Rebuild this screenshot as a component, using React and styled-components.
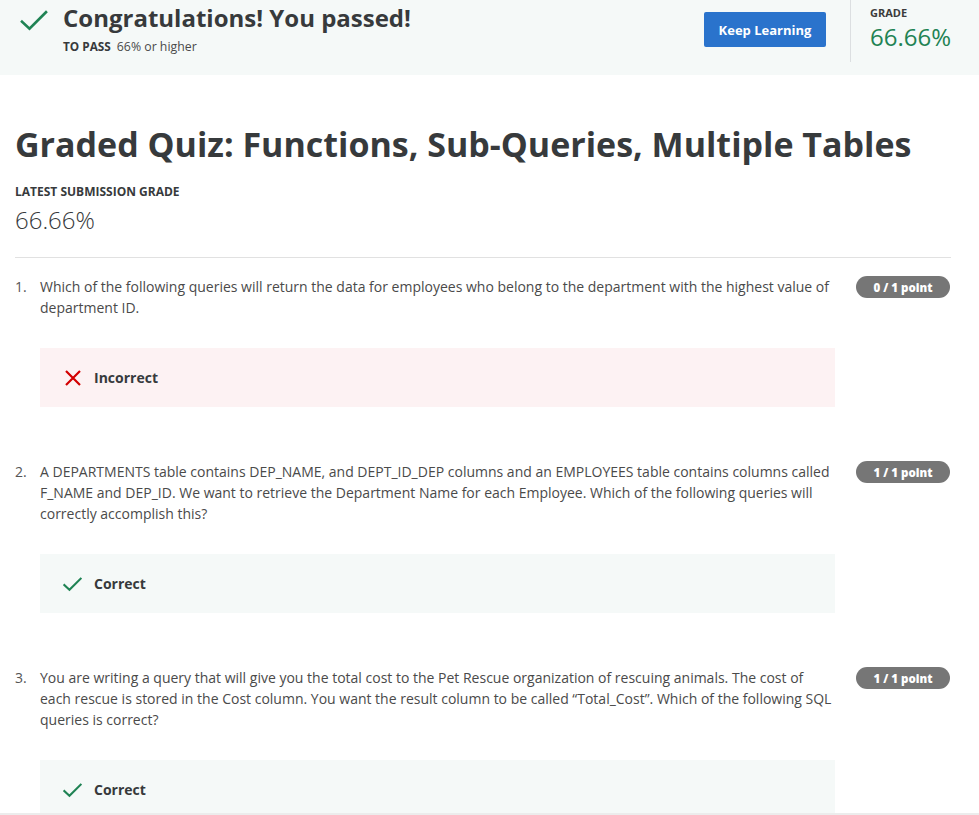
import React from "react";
import styled, { createGlobalStyle } from "styled-components";

const GlobalStyle = createGlobalStyle`
  html, body { margin: 0; padding: 0; background: #ffffff; }
  body { font-family: "Open Sans", "Noto Sans", sans-serif; color: #373a3c; }
  * { box-sizing: border-box; }
`;

const Banner = styled.header`
  display: flex;
  align-items: flex-start;
  height: 75px;
  background: #f5f9f8;
  padding-left: 20px;
`;

const BannerIcon = styled.div`
  width: 28px;
  height: 22px;
  margin-top: 9px;
  flex: none;
`;

const BannerText = styled.div`
  margin-left: 15px;
  display: flex;
  flex-direction: column;
  flex: 1;
`;

const BannerTitle = styled.h2`
  margin: 2px 0 0;
  font-size: 24px;
  line-height: 32px;
  font-weight: 700;
  color: #373a3c;
`;

const PassLine = styled.div`
  margin-top: 4px;
  font-size: 12.3px;
  line-height: 17px;
  color: #4a4a4a;
  span { font-weight: 700; color: #373a3c; margin-right: 6px; font-size: 11.8px; }
`;

const KeepButton = styled.button`
  margin-top: 12px;
  width: 122px;
  height: 35px;
  border: none;
  border-radius: 2px;
  background: #2a73cc;
  color: #ffffff;
  font-family: "Open Sans", "Noto Sans", sans-serif;
  font-size: 13px;
  font-weight: 700;
  flex: none;
`;

const Divider = styled.div`
  width: 1px;
  height: 62px;
  background: #dcdfe1;
  margin-left: 24px;
  flex: none;
`;

const GradeBox = styled.div`
  width: 128px;
  padding-left: 19px;
  padding-top: 5px;
  flex: none;
`;

const GradeLabel = styled.div`
  font-size: 11px;
  line-height: 16px;
  font-weight: 700;
  color: #3c3c3c;
`;

const GradeValue = styled.div`
  font-size: 24px;
  line-height: 32px;
  color: #1f8354;
`;

const Main = styled.main`
  padding: 0 28px 0 15px;
`;

const PageTitle = styled.h1`
  margin: 46px 0 0;
  font-size: 34px;
  line-height: 46px;
  font-weight: 700;
  color: #373a3c;
  white-space: nowrap;
`;

const SubLabel = styled.div`
  margin-top: 16px;
  font-size: 12px;
  line-height: 18px;
  font-weight: 700;
  color: #373a3c;
`;

const SubValue = styled.div`
  margin-top: 3px;
  font-size: 24px;
  line-height: 32px;
  font-weight: 300;
  color: #373a3c;
`;

const Rule = styled.hr`
  border: none;
  border-top: 1px solid #e1e1e1;
  margin: 21px 0 0;
`;

const QuestionList = styled.ol`
  list-style: none;
  margin: 0;
  padding: 0;
`;

const Question = styled.li`
  display: flex;
  align-items: flex-start;
  padding-top: ${(p) => p.$top}px;
`;

const Num = styled.div`
  width: 25px;
  flex: none;
  font-size: 14px;
  line-height: 21px;
  color: #555;
`;

const Body = styled.div`
  display: flex;
  flex-direction: column;
  width: 795px;
  flex: none;
`;

const Prompt = styled.p`
  margin: 0;
  font-size: 14px;
  line-height: 21px;
  color: #4a4a4a;
`;

const Pill = styled.div`
  margin: 0 0 0 21px;
  width: 94px;
  height: 22px;
  flex: none;
  border-radius: 11px;
  background: #767676;
  color: #ffffff;
  font-size: 11.5px;
  font-weight: 800;
  display: flex;
  align-items: center;
  justify-content: center;
`;

const Feedback = styled.div`
  margin-top: 30px;
  height: 59px;
  display: flex;
  align-items: center;
  padding-left: 23px;
  background: ${(p) => (p.$ok ? "#f5f9f8" : "#fdf2f3")};
`;

const FbIcon = styled.div`
  width: 19px;
  height: 19px;
  display: flex;
  align-items: center;
  justify-content: center;
  margin-right: 12px;
`;

const FbText = styled.span`
  font-size: 14px;
  font-weight: 700;
  color: #373a3c;
`;

const BottomStrip = styled.div`
  position: fixed;
  left: 0;
  right: 0;
  bottom: 0;
  height: 2px;
  background: #ececec;
`;

const Check = ({ size = 28, color = "#1f8354", w = 2.6 }) => (
  <svg width={size} height={size * 0.8} viewBox="0 0 28 22" fill="none">
    <path d="M2 12.5 L9.5 19.5 L26 3" stroke={color} strokeWidth={w} strokeLinecap="square" />
  </svg>
);

const Cross = () => (
  <svg width="18" height="18" viewBox="0 0 18 18" fill="none">
    <path d="M2 2 L16 16 M16 2 L2 16" stroke="#d30001" strokeWidth="2.2" />
  </svg>
);

const questions = [
  {
    n: 1,
    text: "Which of the following queries will return the data for employees who belong to the department with the highest value of department ID.",
    points: "0 / 1 point",
    ok: false,
    top: 18,
  },
  {
    n: 2,
    text: "A DEPARTMENTS table contains DEP_NAME, and DEPT_ID_DEP columns and an EMPLOYEES table contains columns called F_NAME and DEP_ID. We want to retrieve the Department Name for each Employee. Which of the following queries will correctly accomplish this?",
    points: "1 / 1 point",
    ok: true,
    top: 54,
  },
  {
    n: 3,
    text: "You are writing a query that will give you the total cost to the Pet Rescue organization of rescuing animals. The cost of each rescue is stored in the Cost column. You want the result column to be called \u201cTotal_Cost\u201d. Which of the following SQL queries is correct?",
    points: "1 / 1 point",
    ok: true,
    top: 54,
  },
];

export default function App() {
  return (
    <>
      <GlobalStyle />
      <Banner>
        <BannerIcon>
          <Check />
        </BannerIcon>
        <BannerText>
          <BannerTitle>Congratulations! You passed!</BannerTitle>
          <PassLine>
            <span>TO PASS</span>66% or higher
          </PassLine>
        </BannerText>
        <KeepButton>Keep Learning</KeepButton>
        <Divider />
        <GradeBox>
          <GradeLabel>GRADE</GradeLabel>
          <GradeValue>66.66%</GradeValue>
        </GradeBox>
      </Banner>
      <Main>
        <PageTitle>Graded Quiz: Functions, Sub-Queries, Multiple Tables</PageTitle>
        <SubLabel>LATEST SUBMISSION GRADE</SubLabel>
        <SubValue>66.66%</SubValue>
        <Rule />
        <QuestionList>
          {questions.map((q) => (
            <Question key={q.n} $top={q.top}>
              <Num>{q.n}.</Num>
              <Body>
                <Prompt>{q.text}</Prompt>
                <Feedback $ok={q.ok}>
                  <FbIcon>{q.ok ? <Check size={20} w={3} /> : <Cross />}</FbIcon>
                  <FbText>{q.ok ? "Correct" : "Incorrect"}</FbText>
                </Feedback>
              </Body>
              <Pill>{q.points}</Pill>
            </Question>
          ))}
        </QuestionList>
      </Main>
      <BottomStrip />
    </>
  );
}
